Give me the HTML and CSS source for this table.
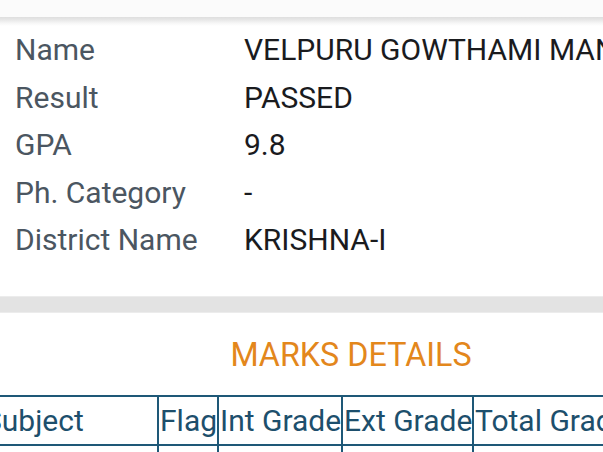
FILE: index.html
```html
<!DOCTYPE html>
<html>
<head>
<meta charset="utf-8">
<link rel="stylesheet" href="styles.css">
</head>
<body>
<div class="topstrip"></div>
<section class="card info">
  <div class="row"><span class="label">Name</span><span class="value">VELPURU GOWTHAMI MANASA</span></div>
  <div class="row"><span class="label">Result</span><span class="value">PASSED</span></div>
  <div class="row"><span class="label">GPA</span><span class="value">9.8</span></div>
  <div class="row"><span class="label">Ph. Category</span><span class="value">-</span></div>
  <div class="row"><span class="label">District Name</span><span class="value">KRISHNA-I</span></div>
</section>
<div class="gap"></div>
<section class="card marks">
  <h2 class="title">MARKS DETAILS</h2>
  <table class="grid">
    <colgroup>
      <col class="c-subject"><col class="c-flag"><col class="c-int"><col class="c-ext"><col class="c-total">
    </colgroup>
    <tr>
      <th>Subject</th><th>Flag</th><th>Int Grade</th><th>Ext Grade</th><th>Total Grade</th>
    </tr>
    <tr class="empty">
      <td></td><td></td><td></td><td></td><td></td>
    </tr>
  </table>
</section>
</body>
</html>
```

FILE: styles.css
```css
html, body {
  margin: 0;
  padding: 0;
}
body {
  width: 603px;
  height: 452px;
  overflow: hidden;
  background: #fafafa;
  font-family: Roboto, "Liberation Sans", sans-serif;
}
.topstrip {
  height: 17px;
  background: #fbfbfb;
}
.card {
  background: #fff;
}
.info {
  background: linear-gradient(#dedede 0, #e8e8e8 3px, #f6f6f6 6px, #fff 9px);
  padding: 9px 0 32px 15px;
}
.row {
  display: grid;
  grid-template-columns: 229px 1fr;
  height: 47.5px;
  align-items: center;
  font-size: 30px;
  white-space: nowrap;
}
.label {
  color: #4b5661;
}
.value {
  color: #1a1b1e;
}
.gap {
  height: 17px;
  background: #e3e3e3;
  border-top: 1px solid #ececec;
  border-bottom: 1px solid #ececec;
  box-sizing: border-box;
}
.marks {
  padding-top: 22px;
  overflow: hidden;
}
.title {
  margin: 0;
  text-align: center;
  padding-left: 99px;
  font-weight: 400;
  font-size: 32.3px;
  line-height: 40px;
  color: #e3871c;
}
.grid {
  margin-top: 20px;
  margin-left: -17px;
  border-collapse: collapse;
  table-layout: fixed;
  width: 760px;
  color: #1d4f6c;
  font-size: 30px;
}
.c-subject { width: 174px; }
.c-flag { width: 60px; }
.c-int { width: 124px; }
.c-ext { width: 131px; }
.c-total { width: 271px; }
.grid th, .grid td {
  border: 2px solid #1e5877;
  font-weight: 400;
  text-align: left;
  padding: 0 1px;
  height: 47px;
  white-space: nowrap;
  overflow: hidden;
}
.grid th:first-child {
  text-indent: -2px;
}
.empty td {
  height: 40px;
}
```
